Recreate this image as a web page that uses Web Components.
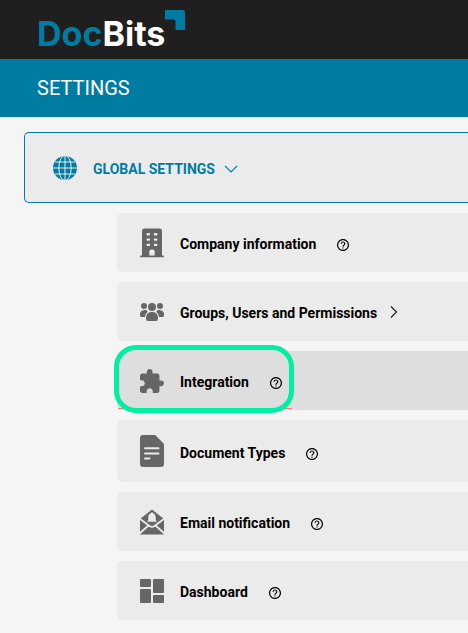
<!DOCTYPE html>
<html lang="en">
<head>
<meta charset="utf-8">
<meta name="viewport" content="width=device-width, initial-scale=1">
<title>DocBits Settings</title>
<style>
  body { margin: 0; background: #f5f5f5; font-family: Roboto, "Liberation Sans", sans-serif; color: #000;
    --brand: #007ca3; --card: #ebebeb; --icon: #666; --active: #dedede; --ring: #00efa3; }
</style>
</head>
<body>
<settings-page></settings-page>
<script>
const ICONS = {
  globe: `<svg width="24" height="24" viewBox="0 0 24 24"><circle cx="12" cy="12" r="12" fill="var(--brand)"/><g fill="none" stroke="var(--card)" stroke-width="1"><path d="M12 0v24M0 12h24M2 6h20M2 18h20"/><ellipse cx="12" cy="12" rx="6.2" ry="12.5"/></g></svg>`,
  building: `<svg width="24" height="30" viewBox="0 0 24 30"><path fill="var(--icon)" fill-rule="evenodd" d="M4.500 .5h15Q22 .5 22 3v24.500h1.200q.8 0 .8.9t-.8.900H.8q-.8 0-.8-.9t.8-.9H2V3Q2 .5 4.500 .5zM7.500 5q-1 0-1 1.200t1 1.200h1.600q1 0 1-1.200T9.100 5zM14.800 5q-1 0-1 1.200t1 1.200h1.700q1 0 1-1.200T16.500 5zM7.500 10.400q-1 0-1 1.200t1 1.200h1.600q1 0 1-1.200t-1-1.200zM14.800 10.400q-1 0-1 1.200t1 1.200h1.700q1 0 1-1.200t-1-1.200zM7.500 15.700q-1 0-1 1.200t1 1.200h1.600q1 0 1-1.200t-1-1.200zM14.800 15.700q-1 0-1 1.200t1 1.200h1.700q1 0 1-1.200t-1-1.200zM9.300 27.500h5.400v-3.700q0-2.300-2.700-2.300t-2.700 2.300z"/></svg>`,
  groups: `<svg width="24" height="18" viewBox="0 0 24 18"><g fill="var(--icon)"><circle cx="4" cy="3" r="3"/><circle cx="20" cy="3" r="3"/><circle cx="12" cy="4" r="4"/><path d="M6.800 7.200C4 6.500 0 8 0 11v1.500Q0 14 1.500 14H5c.1-2.300 1-4 2.900-5.100Q7 8.300 6.800 7.200zM17.200 7.200C20 6.500 24 8 24 11v1.500q0 1.500-1.500 1.500H19c-.1-2.300-1-4-2.900-5.100q.9-.6 1.100-1.700zM12 9c-4 0-6 2.600-6 5.600v1.200Q6 18 8.200 18h7.600q2.200 0 2.200-2.200v-1.200C18 11.600 16 9 12 9z"/></g></svg>`,
  puzzle: `<svg width="24" height="24" viewBox="2 1 21 21"><path fill="var(--icon)" d="M20.500 11H19V7c0-1.100-.9-2-2-2h-4V3.500C13 2.120 11.880 1 10.500 1S8 2.120 8 3.500V5H4c-1.100 0-1.990.9-1.990 2v3.800H3.500c1.490 0 2.700 1.210 2.700 2.700s-1.210 2.700-2.700 2.700H2V20c0 1.100.9 2 2 2h3.800v-1.500c0-1.490 1.210-2.700 2.700-2.700s2.700 1.210 2.700 2.700V22H17c1.100 0 2-.9 2-2v-4h1.500c1.380 0 2.500-1.120 2.500-2.500S21.880 11 20.500 11z"/></svg>`,
  document: `<svg width="24" height="32" viewBox="0 0 24 32"><path fill="var(--icon)" d="M3 0h12.200L24 9v20q0 3-3 3H3q-3 0-3-3V3q0-3 3-3z"/><path d="M5 13.300h13.500M5 18.500h13.500M5 23.600h4.500" stroke="var(--card)" stroke-width="2" stroke-linecap="round"/></svg>`,
  mail: `<svg width="24" height="26" viewBox="0 0 24 26"><path fill="var(--icon)" d="M0 10 12 .5 24 10V25.500H0z"/><path fill="none" stroke="var(--card)" stroke-width="1.800" d="M-1 9 9.500 17Q12 18.800 14.500 17L25 9M-.5 24.500 8.500 16.500M24.500 24.500 15.500 16.500"/><path fill="var(--card)" d="M12 3.300q1 0 1 1 2.700.8 2.700 3.700v3l1 1.200v.6H7.300v-.6l1-1.200V8q0-2.900 2.700-3.700 0-1 1-1z"/></svg>`,
  dashboard: `<svg width="24" height="24" viewBox="0 0 24 24" fill="var(--icon)"><rect width="11" height="8" rx="1"/><rect y="10" width="11" height="14" rx="1"/><rect x="13" width="11" height="14" rx="1"/><rect x="13" y="16" width="11" height="8" rx="1"/></svg>`,
  down: `<svg width="14" height="8" viewBox="0 0 14 8"><path d="M1 1l6 6 6-6" fill="none" stroke="currentColor" stroke-width="1.100"/></svg>`,
  right: `<svg width="8" height="14" viewBox="0 0 8 14"><path d="M1 1.500 6.500 7 1 12.500" fill="none" stroke="#222" stroke-width="1.200"/></svg>`,
  help: `<svg width="12" height="12" viewBox="2 2 20 20"><path d="M11 18h2v-2h-2v2zm1-16C6.480 2 2 6.480 2 12s4.480 10 10 10 10-4.480 10-10S17.520 2 12 2zm0 18c-4.410 0-8-3.590-8-8s3.590-8 8-8 8 3.590 8 8-3.590 8-8 8zm0-14c-2.210 0-4 1.790-4 4h2c0-1.100.9-2 2-2s2 .9 2 2c0 2-3 1.750-3 5h2c0-2.250 3-2.500 3-5 0-2.210-1.790-4-4-4z"/></svg>`
};
function define(name, render) {
  customElements.define(name, class extends HTMLElement {
    connectedCallback() {
      if (!this.shadowRoot) this.attachShadow({ mode: "open" }).innerHTML = render(this);
    }
  });
}

define("ui-icon", el => `<style>:host{display:flex;flex:none}svg{display:block}</style>${ICONS[el.getAttribute("name")]}`);

define("brand-header", () => `<style>
  :host{display:flex;background:#1f1f1f;padding:10px 37px 13px}
  a{display:flex;text-decoration:none;color:#fff;font:700 34px/36px Inter,sans-serif}
  .name{padding-top:6px;height:30px}
  .name span{color:var(--brand)}
  svg{display:block}
</style><a href="#"><span class="name"><span>Doc</span>Bits</span><svg width="20" height="20" viewBox="0 0 20 20" aria-hidden="true"><path fill="var(--brand)" d="M0 0h17.500Q20 0 20 2.500V20H10.500V12Q10.500 9.500 8 9.500H0z"/></svg></a>`);

define("page-title", () => `<style>
  :host{display:block;background:var(--brand);padding:17px 37px}
  h1{margin:0;font-size:20px;line-height:24px;font-weight:400;color:#fff}
</style><h1><slot></slot></h1>`);

define("settings-section", () => `<style>
  :host{display:block;padding:15px 0 13px 24px}
  button{display:flex;align-items:center;width:100%;box-sizing:border-box;padding:23px 28px 22px;border:1px solid var(--brand);border-right:0;border-radius:5px 0 0 5px;background:var(--card);color:var(--brand);font-family:inherit;font-size:14px;font-weight:700;line-height:24px}
  .label{margin-left:16px;padding-top:2px;line-height:22px}
  .chev{margin-left:9px;padding-top:2px}
  .list{display:flex;flex-direction:column;gap:10px;padding:10px 0 0 93px}
</style><button aria-expanded="true"><ui-icon name="globe"></ui-icon><span class="label"><slot name="title"></slot></span><ui-icon class="chev" name="down"></ui-icon></button>
<div class="list"><slot></slot></div>`);

define("settings-item", el => {
  const group = el.hasAttribute("group"), tag = group ? "button" : "a";
  return `<style>
  :host{display:flex;align-items:center;position:relative;min-height:59px;background:var(--card);border-radius:5px 0 0 5px;font-size:14px;font-weight:700;line-height:20px}
  :host([icon=document]){min-height:62px}
  :host([active]){background:var(--active)}
  .main{display:flex;align-items:center;padding:0 0 0 23px;border:0;background:none;color:#000;font:inherit;text-decoration:none;position:relative;z-index:1}
  .label{margin-left:16px;padding-top:3px}
  .chev{margin-left:13px}
  .help{position:relative;z-index:1;margin:5px 0 0 21px;padding:0;border:0;background:none;display:flex}
  .mark{position:absolute;left:-3px;top:-6px;width:170px;height:58px;border:5px solid var(--ring);border-radius:22px;background:linear-gradient(var(--active),var(--active)) padding-box}
  .line{position:absolute;left:1px;top:57px;width:174px;height:1px;background:#f47c70}
</style>${el.hasAttribute("active") ? '<span class="line"></span><span class="mark"></span>' : ""}
<${tag} class="main" ${group ? 'aria-expanded="false"' : 'href="#"'}><ui-icon name="${el.getAttribute("icon")}"></ui-icon><span class="label"><slot></slot></span>${group ? '<ui-icon class="chev" name="right"></ui-icon>' : ""}</${tag}>
${group ? "" : '<button class="help" aria-label="Help"><ui-icon name="help"></ui-icon></button>'}`;
});

define("settings-page", () => `<style>:host{display:block;overflow:hidden}</style>
<brand-header></brand-header>
<page-title>SETTINGS</page-title>
<settings-section><span slot="title">GLOBAL SETTINGS</span>
<settings-item icon="building">Company information</settings-item>
<settings-item icon="groups" group>Groups, Users and Permissions</settings-item>
<settings-item icon="puzzle" active>Integration</settings-item>
<settings-item icon="document">Document Types</settings-item>
<settings-item icon="mail">Email notification</settings-item>
<settings-item icon="dashboard">Dashboard</settings-item>
</settings-section>`);
</script>
</body>
</html>
